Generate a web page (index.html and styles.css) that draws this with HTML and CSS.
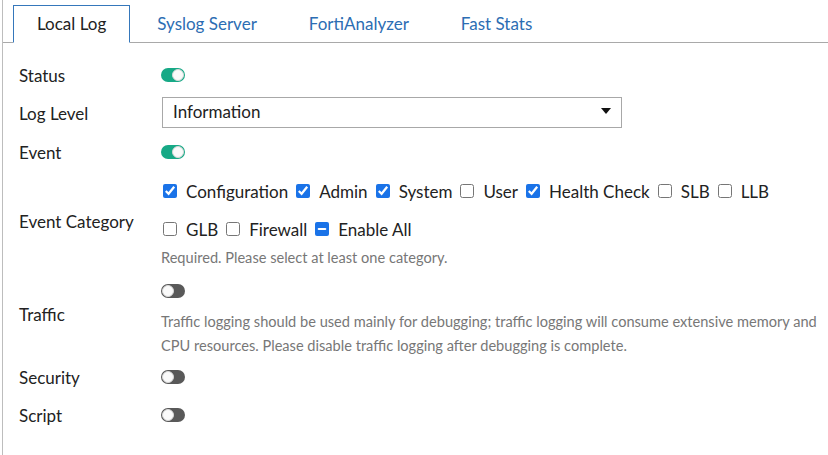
FILE: index.html
```html
<!DOCTYPE html>
<html lang="en">
<head>
<meta charset="utf-8">
<title>Log Settings</title>
<link rel="stylesheet" href="styles.css">
</head>
<body>
<div class="panel">
  <nav class="tabs">
    <a class="tab active">Local Log</a>
    <a class="tab">Syslog Server</a>
    <a class="tab">FortiAnalyzer</a>
    <a class="tab">Fast Stats</a>
  </nav>

  <form class="form">
    <div class="row">
      <div class="label">Status</div>
      <div class="control"><span class="toggle on"></span></div>
    </div>

    <div class="row">
      <div class="label">Log Level</div>
      <div class="control">
        <div class="select">
          <span>Information</span>
          <span class="caret"></span>
        </div>
      </div>
    </div>

    <div class="row event">
      <div class="label">Event</div>
      <div class="control"><span class="toggle on"></span></div>
    </div>

    <div class="row category">
      <div class="label">Event Category</div>
      <div class="control stack">
        <div class="checks">
          <label class="check"><input type="checkbox" checked>Configuration</label>
          <label class="check"><input type="checkbox" checked>Admin</label>
          <label class="check"><input type="checkbox" checked>System</label>
          <label class="check"><input type="checkbox">User</label>
          <label class="check"><input type="checkbox" checked>Health Check</label>
          <label class="check"><input type="checkbox">SLB</label>
          <label class="check"><input type="checkbox">LLB</label>
        </div>
        <div class="checks">
          <label class="check"><input type="checkbox">GLB</label>
          <label class="check"><input type="checkbox">Firewall</label>
          <label class="check"><input type="checkbox" id="enable-all" checked>Enable All</label>
        </div>
        <div class="help short">Required. Please select at least one category.</div>
      </div>
    </div>

    <div class="row">
      <div class="label">Traffic</div>
      <div class="control stack">
        <div class="line"><span class="toggle"></span></div>
        <div class="help">Traffic logging should be used mainly for debugging; traffic logging will consume extensive memory and CPU resources. Please disable traffic logging after debugging is complete.</div>
      </div>
    </div>

    <div class="row">
      <div class="label">Security</div>
      <div class="control"><span class="toggle"></span></div>
    </div>

    <div class="row">
      <div class="label">Script</div>
      <div class="control"><span class="toggle"></span></div>
    </div>
  </form>
</div>
<script src="script.js"></script>
</body>
</html>
```

FILE: styles.css
```css
html, body {
  margin: 0;
  padding: 0;
  background: #fff;
}

body {
  font-family: Lato, "Open Sans", sans-serif;
  font-size: 17px;
  color: #222;
}

.panel {
  margin-left: 2px;
  border-left: 1px solid #bdbdbd;
  min-height: 455px;
  box-sizing: border-box;
}

/* tab strip */
.tabs {
  display: flex;
  align-items: flex-end;
  height: 43px;
  padding-left: 10px;
  border-bottom: 1px solid #a9a9a9;
  box-sizing: border-box;
}

.tab {
  display: flex;
  align-items: center;
  height: 37px;
  padding: 0 25px 2px;
  margin-right: 2px;
  font-size: 17px;
  color: #2c6db3;
  box-sizing: border-box;
  margin-bottom: -1px;
}

.tab.active {
  padding: 0 23px 2px;
  color: #222;
  background: #fff;
  border: 1px solid #3577bb;
  border-bottom: 1px solid #fff;
  height: 38px;
}

/* form rows */
.form {
  display: flex;
  flex-direction: column;
  padding: 13px 0 0 16px;
}

.row {
  display: flex;
  align-items: center;
  min-height: 38px;
}

.row.event {
  margin-top: 1px;
}

.row.category {
  margin-top: 1px;
}

.label {
  width: 142px;
  flex: none;
}

.control {
  display: flex;
  align-items: center;
  min-height: 38px;
}

.control.stack {
  flex-direction: column;
  align-items: flex-start;
}

.line {
  display: flex;
  align-items: center;
  height: 39px;
}

/* toggle switch */
.toggle {
  position: relative;
  display: inline-block;
  width: 24px;
  height: 14px;
  border-radius: 7px;
  background: #595959;
}

.toggle::after {
  content: "";
  position: absolute;
  top: 1px;
  left: 1px;
  width: 12px;
  height: 12px;
  box-sizing: border-box;
  border-radius: 50%;
  background: #fafafa;
  border: 1px solid #d8d8d8;
}

.toggle.on {
  background: #17a986;
}

.toggle.on::after {
  left: 11px;
}

/* select box */
.select {
  display: flex;
  align-items: center;
  justify-content: space-between;
  width: 460px;
  height: 31px;
  padding: 0 10px 2px 10px;
  border: 1px solid #a8a8a8;
  box-sizing: border-box;
  margin-left: 1px;
  margin-top: -2px;
}

.caret {
  width: 0;
  height: 0;
  border-left: 5px solid transparent;
  border-right: 5px solid transparent;
  border-top: 6px solid #111;
}

/* checkboxes */
.checks {
  display: flex;
  align-items: center;
  height: 38px;
}

.check {
  display: flex;
  align-items: center;
  margin-right: 6px;
}

.check input {
  margin: 0 9px 0 2px;
  width: 14px;
  height: 14px;
  accent-color: #1a73e8;
}

.help {
  font-size: 14.6px;
  line-height: 24px;
  color: #777;
  width: 664px;
}

.help.short {
  line-height: 20px;
  margin-bottom: 3px;
}
```

FILE: script.js
```js
// "Enable All" shows a partial selection while only some categories are ticked
document.getElementById('enable-all').indeterminate = true;
```
